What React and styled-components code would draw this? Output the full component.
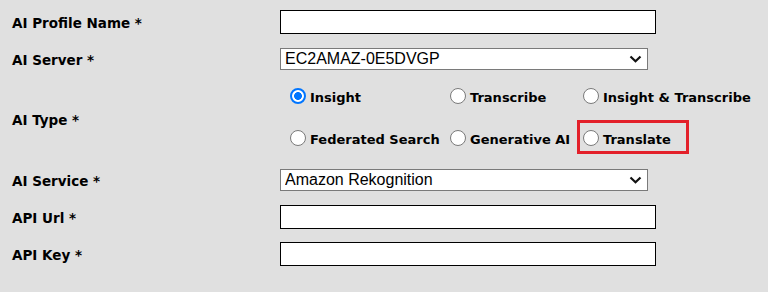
import styled, { createGlobalStyle } from "styled-components";

const GlobalStyle = createGlobalStyle`
	html, body {
		margin: 0;
		padding: 0;
		background: #e0e0e0;
	}
	body {
		width: 768px;
		height: 292px;
		overflow: hidden;
	}
`;

const aiTypes = [
	{ id: "insight", label: "Insight", checked: true },
	{ id: "transcribe", label: "Transcribe" },
	{ id: "both", label: "Insight & Transcribe" },
	{ id: "federated", label: "Federated Search" },
	{ id: "generative", label: "Generative AI" },
	{ id: "translate", label: "Translate", highlight: true },
];

const Chevron = () => (
	<ChevronIcon width="13" height="8" viewBox="0 0 13 8">
		<polyline points="1.5,1.5 6.5,6.2 11.5,1.5" fill="none" stroke="#111" strokeWidth="2.2" />
	</ChevronIcon>
);

const SelectBox = ({ value }) => (
	<SelectWrap>
		<Select defaultValue={value}>
			<option>{value}</option>
		</Select>
		<Chevron />
	</SelectWrap>
);

const App = () => {
	return (
		<>
			<GlobalStyle />
			<Form>
				<Label>AI Profile Name *</Label>
				<Field>
					<TextInput type="text" />
				</Field>

				<Label>AI Server *</Label>
				<Field>
					<SelectBox value="EC2AMAZ-0E5DVGP" />
				</Field>

				<Label>AI Type *</Label>
				<Field>
					<RadioGroup>
						{aiTypes.map((t) => (
							<Option key={t.id} $highlight={t.highlight}>
								<Radio type="radio" name="aiType" defaultChecked={t.checked} />
								{t.label}
							</Option>
						))}
					</RadioGroup>
				</Field>

				<Label>AI Service *</Label>
				<Field>
					<SelectBox value="Amazon Rekognition" />
				</Field>

				<Label>API Url *</Label>
				<Field>
					<TextInput type="text" />
				</Field>

				<Label>API Key *</Label>
				<Field>
					<TextInput type="text" />
				</Field>
			</Form>
		</>
	);
};

const Form = styled.div`
	display: grid;
	grid-template-columns: 268px 1fr;
	grid-template-rows: 37px 37px 84px 37px 37px 37px;
	padding: 3px 0 0 12px;
`;

const Label = styled.div`
	align-self: center;
	padding-top: 2px;
	font-family: "DejaVu Sans", Verdana, sans-serif;
	font-weight: bold;
	font-size: 13.5px;
	color: #000;
`;

const Field = styled.div`
	display: flex;
	align-items: center;
`;

const TextInput = styled.input`
	box-sizing: border-box;
	width: 376px;
	height: 24px;
	margin: 0;
	border: 1px solid #000;
	background: #fff;
	padding: 0 4px;
	font: 16px "Liberation Sans", Arial, sans-serif;
	outline: none;
`;

const SelectWrap = styled.div`
	position: relative;
	width: 368px;
	height: 22px;
`;

const Select = styled.select`
	appearance: none;
	box-sizing: border-box;
	width: 100%;
	height: 100%;
	margin: 0;
	border: 1px solid #7a7a7a;
	border-radius: 0;
	background: #fff;
	padding: 0 24px 0 4px;
	font: 16px "Liberation Sans", Arial, sans-serif;
	color: #000;
	outline: none;
`;

const ChevronIcon = styled.svg`
	position: absolute;
	right: 6px;
	top: 7px;
	pointer-events: none;
`;

const RadioGroup = styled.div`
	display: grid;
	grid-template-columns: 160px 133px auto;
	grid-auto-rows: 42px;
	align-content: center;
	padding-left: 10px;
	margin-top: -1px;
`;

const Option = styled.label`
	position: relative;
	align-self: center;
	justify-self: start;
	display: flex;
	align-items: center;
	gap: 4px;
	height: 20px;
	font-family: "DejaVu Sans", Verdana, sans-serif;
	font-weight: bold;
	font-size: 13px;
	color: #000;

	&::after {
		content: "";
		display: ${(props) => (props.$highlight ? "block" : "none")};
		position: absolute;
		left: -6px;
		top: -10px;
		width: 112px;
		height: 34px;
		box-sizing: border-box;
		border: 3px solid #e3202a;
	}
`;

const Radio = styled.input`
	appearance: none;
	box-sizing: border-box;
	width: 16px;
	height: 16px;
	margin: -4px 0 0;
	border: 1px solid #7a7a7a;
	border-radius: 50%;
	background: #fff;

	&:checked {
		border: 2px solid #0075ff;
		background: radial-gradient(circle, #0075ff 0 3.6px, #fff 4.2px);
	}
`;

export default App;
